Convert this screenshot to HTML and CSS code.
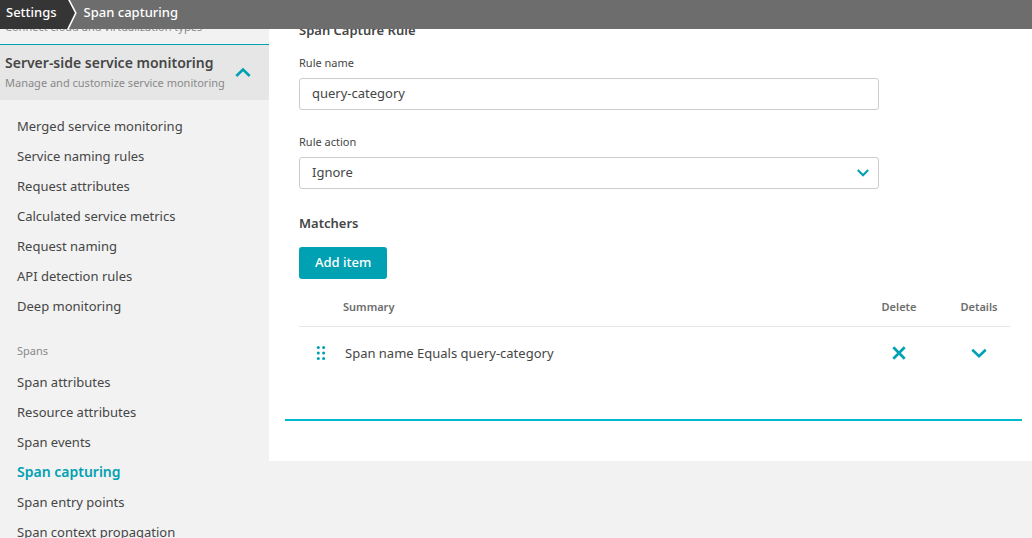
FILE: index.html
```html
<!DOCTYPE html>
<html lang="en">
<head>
<meta charset="utf-8">
<title>Span capturing - Settings</title>
<link rel="stylesheet" href="styles.css">
</head>
<body>
<header class="topbar">
  <nav class="crumbs" aria-label="Breadcrumb">
    <a class="crumb crumb-root" href="#">Settings</a>
    <svg class="crumb-arrow" width="12" height="29" viewBox="0 0 12 29" aria-hidden="true"><path d="M0 0H3L9.5 13L1.5 29H0Z" fill="#353535"/><path d="M2.5 -1L9.8 13L1.5 30" fill="none" stroke="#fff" stroke-width="1.6"/></svg>
    <a class="crumb" href="#">Span capturing</a>
  </nav>
</header>
<div class="layout">
  <aside class="sidebar">
    <div class="previous"><p class="hint">Connect cloud and virtualization types</p></div>
    <button class="section" type="button" aria-expanded="true">
      <span class="section-text">
        <span class="section-title">Server-side service monitoring</span>
        <span class="hint">Manage and customize service monitoring</span>
      </span>
      <svg class="section-arrow" width="16" height="10" viewBox="0 0 16 10" aria-hidden="true"><path d="M1.3 9L8 2.5L14.7 9" fill="none" stroke="#00a1b2" stroke-width="2.6"/></svg>
    </button>
    <nav class="menu" aria-label="Service monitoring">
      <a href="#">Merged service monitoring</a>
      <a href="#">Service naming rules</a>
      <a href="#">Request attributes</a>
      <a href="#">Calculated service metrics</a>
      <a href="#">Request naming</a>
      <a href="#">API detection rules</a>
      <a href="#">Deep monitoring</a>
      <p class="menu-group">Spans</p>
      <a href="#">Span attributes</a>
      <a href="#">Resource attributes</a>
      <a href="#">Span events</a>
      <a class="active" href="#" aria-current="page">Span capturing</a>
      <a href="#">Span entry points</a>
      <a href="#">Span context propagation</a>
    </nav>
  </aside>
  <main class="content">
    <form class="rule">
      <h2 class="heading">Span Capture Rule</h2>
      <div class="field">
        <label for="name">Rule name</label>
        <input class="control" id="name" type="text" value="query-category">
      </div>
      <div class="field">
        <label for="action">Rule action</label>
        <div class="select">
          <select class="control" id="action"><option>Ignore</option></select>
          <svg class="select-arrow" width="12" height="8" viewBox="0 0 12 8" aria-hidden="true"><path d="M.8 1L6 6.2L11.2 1" fill="none" stroke="#00a1b2" stroke-width="2.1"/></svg>
        </div>
      </div>
      <h2 class="heading matchers-heading">Matchers</h2>
      <button class="add" type="button">Add item</button>
      <table class="matchers">
        <thead>
          <tr><th class="grip-col"></th><th class="summary-col">Summary</th><th class="delete-col">Delete</th><th class="details-col">Details</th></tr>
        </thead>
        <tbody>
          <tr>
            <td class="grip-col"><svg width="10" height="14" viewBox="0 0 10 14" fill="#00a1b2" role="img" aria-label="Reorder"><circle cx="2.3" cy="1.6" r="1.5"/><circle cx="7.6" cy="1.6" r="1.5"/><circle cx="2.3" cy="7" r="1.5"/><circle cx="7.6" cy="7" r="1.5"/><circle cx="2.3" cy="12.4" r="1.5"/><circle cx="7.6" cy="12.4" r="1.5"/></svg></td>
            <td class="summary">Span name Equals query-category</td>
            <td><button class="icon" type="button" aria-label="Delete"><svg width="14" height="14" viewBox="0 0 14 14"><path d="M1.3 1.3L12.7 12.7M12.7 1.3L1.3 12.7" stroke="#00a1b2" stroke-width="2.7"/></svg></button></td>
            <td><button class="icon" type="button" aria-label="Details"><svg width="16" height="14" viewBox="0 0 16 14"><path d="M1.3 3.8L8 10.3L14.7 3.8" fill="none" stroke="#00a1b2" stroke-width="2.6"/></svg></button></td>
          </tr>
        </tbody>
      </table>
    </form>
  </main>
</div>
</body>
</html>
```
FILE: styles.css
```css
* { box-sizing: border-box; }
body {
  margin: 0;
  height: 100vh;
  overflow: hidden;
  background: #f2f2f2;
  color: #454646;
  font: 13px/20px "Noto Sans", "Open Sans", sans-serif;
}
a { color: inherit; text-decoration: none; }
h2, p { margin: 0; }
button, input, select { font: inherit; color: inherit; }
svg { display: block; }

.topbar {
  position: fixed;
  top: 0;
  left: 0;
  right: 0;
  z-index: 2;
  background: #6d6d6d;
  color: #fff;
}
.crumbs { display: flex; height: 29px; }
.crumb { padding: 2px 6px; font-weight: 500; }
.crumb-root { padding-right: 9px; background: #353535; }

.layout { display: grid; grid-template-columns: 269px 1fr; align-items: start; }
.previous { padding: 18px 5px 8px; border-bottom: 1px solid #00a1b2; }
.hint { display: block; color: #898989; font-size: 11px; line-height: 18px; white-space: nowrap; }
.section {
  display: flex;
  align-items: center;
  justify-content: space-between;
  width: 100%;
  padding: 7px 18px 8px 5px;
  border: 0;
  background: #e6e6e6;
  text-align: left;
}
.section-arrow { flex: none; }
.section-title { display: block; font-size: 14px; font-weight: 600; line-height: 22px; white-space: nowrap; }
.menu { padding: 11px 17px; }
.menu a { display: block; line-height: 30px; }
.menu .active { color: #00a1b2; font-size: 14px; font-weight: 600; }
.menu-group { padding: 20px 0 6px; color: #898989; font-size: 11px; }

.content { padding: 20px 10px 40px 16px; background: #fff; }
.rule { padding: 0 12px 40px 14px; border-bottom: 2px solid #00b9cc; }
.heading { font-size: 13px; line-height: 20px; font-weight: 600; }
.matchers-heading { margin-top: 15px; }
.field { display: grid; max-width: 580px; padding: 13px 0 9px; }
.field label { font-size: 11px; line-height: 20px; padding-bottom: 5px; }
.control {
  width: 100%;
  height: 32px;
  padding: 0 12px 2px;
  border: 1px solid #ccc;
  border-radius: 3px;
  background: #fff;
  appearance: none;
}
.select { position: relative; }
.select-arrow { position: absolute; top: 12px; right: 10px; pointer-events: none; }
.add {
  display: block;
  height: 32px;
  margin-top: 14px;
  padding: 0 16px 2px;
  border: 0;
  border-radius: 3px;
  background: #00a1b2;
  color: #fff;
  font-weight: 500;
}
.matchers { width: 100%; margin-top: 10px; border-collapse: collapse; table-layout: fixed; }
.matchers th {
  height: 37px;
  padding: 0;
  border-bottom: 1px solid #e6e6e6;
  color: #6d6d6d;
  font-size: 11px;
  font-weight: 600;
}
.matchers td { height: 53px; padding: 0; }
.matchers .grip-col { width: 44px; padding-left: 17px; }
.matchers .summary-col { text-align: left; }
.matchers .summary { padding-left: 2px; }
.matchers .delete-col { width: 98px; }
.matchers .details-col { width: 62px; }
.icon { display: block; margin: 0 auto; padding: 0; border: 0; background: none; }
```
